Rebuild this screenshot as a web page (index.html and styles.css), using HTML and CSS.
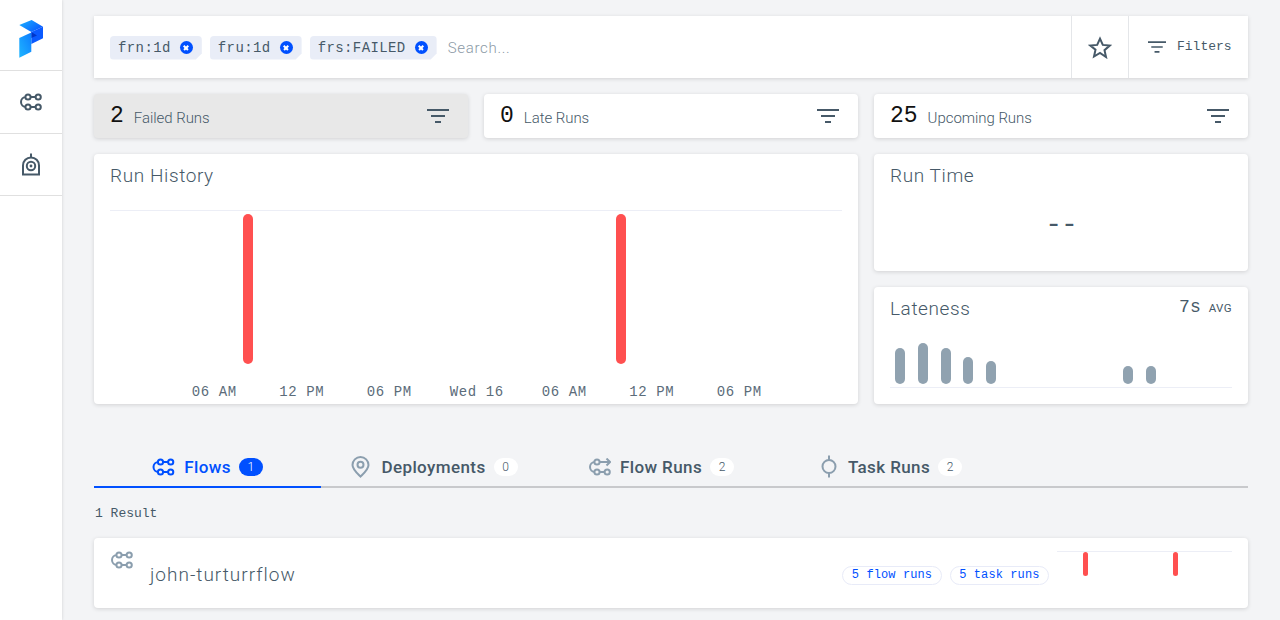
FILE: index.html
```html
<!DOCTYPE html>
<html>
	<head>
		<meta charset="UTF-8">
		<title>Dashboard</title>
		<link rel="stylesheet" href="styles.css">
	</head>
	<body>
		<svg class="defs" width="0" height="0">
			<defs>
				<symbol id="i-flow" viewBox="0 0 22 18">
					<g fill="none" stroke="currentColor" stroke-width="2">
						<circle cx="8" cy="4" r="2.6"/>
						<circle cx="18.2" cy="4" r="2.6"/>
						<circle cx="8" cy="14" r="2.6"/>
						<circle cx="18.2" cy="14" r="2.6"/>
						<path d="M10.6 4h5M10.6 14h5M5.400 4H6A5 5 0 0 0 6 14h-.6"/>
					</g>
				</symbol>
				<symbol id="i-filter" viewBox="0 0 22 16">
					<path fill="currentColor" d="M0 1h22v2H0zM4 7h14v2H4zM8 13h6v2H8z"/>
				</symbol>
			</defs>
		</svg>

		<div class="app">
			<nav class="sidebar">
				<a class="side-item side-logo">
					<svg width="24" height="38" viewBox="0 0 24 38">
						<defs>
							<linearGradient id="lg1" x1="0" y1="0" x2="1" y2="0.6">
								<stop offset="0" stop-color="#1bb4ff"/>
								<stop offset="1" stop-color="#0a5cff"/>
							</linearGradient>
							<linearGradient id="lg2" x1="0" y1="1" x2="1" y2="0">
								<stop offset="0" stop-color="#1fb6ff"/>
								<stop offset="1" stop-color="#0d7cff"/>
							</linearGradient>
						</defs>
						<path fill="url(#lg1)" d="M0.3 5L12.6 0L24 6.700L12.300 12z"/>
						<path fill="#0a5aff" d="M12.300 12L24 6.700V18.300L12.300 24z"/>
						<path fill="#0035c8" d="M12.300 12L18 15.500L12.300 18z"/>
						<path fill="url(#lg2)" d="M0.3 18L12.300 12.500V31.700L0.3 37.700z"/>
					</svg>
				</a>
				<a class="side-item">
					<svg class="side-icon" width="22" height="18"><use href="#i-flow"/></svg>
				</a>
				<a class="side-item">
					<svg class="side-icon" width="20" height="23" viewBox="0 0 20 23">
						<g fill="none" stroke="currentColor" stroke-width="2">
							<path d="M2 21.500V12.500C2 8 5.500 4.500 10 4.500S18 8 18 12.500V21.500H1M10 0.500V4.500"/>
							<circle cx="10" cy="13" r="4.200"/>
						</g>
						<circle cx="10" cy="13" r="1.400" fill="currentColor"/>
					</svg>
				</a>
			</nav>

			<main class="main">
				<section class="searchbar">
					<div class="search-tags">
						<span class="tag">frn:1d<i class="tag-x"></i></span>
						<span class="tag">fru:1d<i class="tag-x"></i></span>
						<span class="tag">frs:FAILED<i class="tag-x"></i></span>
						<span class="search-input">Search...</span>
					</div>
					<div class="search-star">
						<svg width="24" height="23" viewBox="0 0 24 23">
							<path fill="none" stroke="currentColor" stroke-width="2" stroke-linejoin="miter" d="M12 2.600l2.800 6.300 6.900.7-5.200 4.600 1.500 6.800L12 17l-6 3.500 1.500-6.800L2.300 9.600l6.900-.7z"/>
						</svg>
					</div>
					<div class="search-filters">
						<svg width="18" height="14"><use href="#i-filter"/></svg>
						<span>Filters</span>
					</div>
				</section>

				<section class="tiles">
					<div class="card tile tile-active">
						<span class="tile-num">2</span>
						<span class="tile-label">Failed Runs</span>
						<svg class="tile-filter" width="22" height="16"><use href="#i-filter"/></svg>
					</div>
					<div class="card tile">
						<span class="tile-num">0</span>
						<span class="tile-label">Late Runs</span>
						<svg class="tile-filter" width="22" height="16"><use href="#i-filter"/></svg>
					</div>
					<div class="card tile">
						<span class="tile-num">25</span>
						<span class="tile-label">Upcoming Runs</span>
						<svg class="tile-filter" width="22" height="16"><use href="#i-filter"/></svg>
					</div>
				</section>

				<section class="charts">
					<div class="card history">
						<h2 class="card-title">Run History</h2>
						<svg class="history-chart" width="732" height="155">
							<rect x="0" y="0" width="732" height="1" fill="#eceef6"/>
							<rect class="bar-fail" x="133" y="4" width="10" height="150" rx="5"/>
							<rect class="bar-fail" x="506" y="4" width="10" height="150" rx="5"/>
						</svg>
						<div class="history-axis">
							<span>06 AM</span>
							<span>12 PM</span>
							<span>06 PM</span>
							<span>Wed 16</span>
							<span>06 AM</span>
							<span>12 PM</span>
							<span>06 PM</span>
						</div>
					</div>
					<div class="card runtime">
						<h2 class="card-title">Run Time</h2>
						<div class="runtime-value">--</div>
					</div>
					<div class="card lateness">
						<div class="lateness-head">
							<h2 class="card-title">Lateness</h2>
							<div class="lateness-avg"><span>7s</span><small>AVG</small></div>
						</div>
						<svg class="lateness-chart" width="342" height="46">
							<rect class="bar-late" x="5" y="6" width="10" height="36" rx="5"/>
							<rect class="bar-late" x="28" y="1" width="10" height="41" rx="5"/>
							<rect class="bar-late" x="51" y="6" width="10" height="36" rx="5"/>
							<rect class="bar-late" x="73" y="15" width="10" height="27" rx="5"/>
							<rect class="bar-late" x="96" y="19" width="10" height="23" rx="5"/>
							<rect class="bar-late" x="233" y="24" width="10" height="18" rx="5"/>
							<rect class="bar-late" x="256" y="24" width="10" height="18" rx="5"/>
							<rect x="0" y="45" width="342" height="1" fill="#eceef6"/>
						</svg>
					</div>
				</section>

				<section class="tabs">
					<a class="tab tab-active">
						<svg width="23" height="18"><use href="#i-flow"/></svg>
						<span class="tab-text">Flows</span>
						<span class="tab-count">1</span>
					</a>
					<a class="tab">
						<svg class="tab-icon tab-icon-gap" width="19" height="22" viewBox="0 0 18 22">
							<path fill="none" stroke="currentColor" stroke-width="2" d="M9 20.600C5 16.600 1 13.200 1 9a8 8 0 0 1 16 0c0 4.200-4 7.600-8 11.600z"/>
							<circle cx="9" cy="8.800" r="3" fill="none" stroke="currentColor" stroke-width="2"/>
						</svg>
						<span class="tab-text">Deployments</span>
						<span class="tab-count">0</span>
					</a>
					<a class="tab">
						<svg class="tab-icon" width="22" height="18" viewBox="0 0 22 18">
							<g fill="none" stroke="currentColor" stroke-width="2">
								<circle cx="8" cy="4" r="2.600"/>
								<circle cx="8" cy="14" r="2.600"/>
								<circle cx="18.200" cy="14" r="2.600"/>
								<path d="M10.600 4H21M17.500 0.500L21 4l-3.500 3.500M10.600 14h5M5.400 4H6A5 5 0 0 0 6 14h-.6"/>
							</g>
						</svg>
						<span class="tab-text">Flow Runs</span>
						<span class="tab-count">2</span>
					</a>
					<a class="tab tab-last">
						<svg class="tab-icon tab-icon-gap" width="16" height="23" viewBox="0 0 16 22">
							<g fill="none" stroke="currentColor" stroke-width="2">
								<circle cx="8" cy="11" r="6.500"/>
								<path d="M8 0v4.500M8 17.500V22"/>
							</g>
						</svg>
						<span class="tab-text">Task Runs</span>
						<span class="tab-count">2</span>
					</a>
				</section>

				<div class="results">1 Result</div>

				<section class="card flow-row">
					<svg class="flow-icon" width="22" height="18"><use href="#i-flow"/></svg>
					<span class="flow-name">john-turturrflow</span>
					<span class="pill">5 flow runs</span>
					<span class="pill">5 task runs</span>
					<svg class="flow-chart" width="175" height="38">
						<rect x="0" y="12" width="175" height="1" fill="#eceef6"/>
						<rect class="bar-fail" x="26" y="13" width="5" height="24" rx="2.500"/>
						<rect class="bar-fail" x="116" y="13" width="5" height="24" rx="2.500"/>
					</svg>
				</section>
			</main>
		</div>
	</body>
</html>
```
FILE: styles.css
```css
body{
	margin:0;
	background-color:#f3f4f6;
	font-family:"Roboto","Liberation Sans",sans-serif;
	color:#465968;
	overflow:hidden;
}
h2{
	margin:0;
	font-weight:400;
}
.defs{
	position:absolute;
}
.app{
	display:flex;
	height:620px;
}

/* left bar */
.sidebar{
	width:62px;
	flex:none;
	background:#fff;
	box-shadow:0 0 3px rgba(0,0,0,.15);
}
.side-item{
	display:flex;
	align-items:center;
	justify-content:center;
	height:61px;
	border-bottom:1px solid #e0e0e0;
}
.side-logo{
	height:70px;
}
.side-item + .side-item{
	height:61.500px;
}
.side-logo svg{
	margin-top:8px;
}
.side-icon{
	color:#465968;
}

.main{
	width:1154px;
	margin-left:32px;
	padding-top:16px;
}
.card{
	background:#fff;
	border-radius:4px;
	box-shadow:0 1px 4px rgba(0,0,0,.14);
}

/* search */
.searchbar{
	display:flex;
	height:62px;
	background:#fff;
	box-shadow:0 1px 4px rgba(0,0,0,.14);
}
.search-tags{
	flex:1;
	display:flex;
	align-items:center;
	gap:8px;
	padding:0 16px;
}
.tag{
	display:flex;
	align-items:center;
	height:24px;
	padding:0 9px 0 8px;
	margin-top:1px;
	background:#e9edf7;
	border-radius:4px;
	font:14px "Liberation Mono",monospace;
	letter-spacing:.4px;
	color:#465968;
	clip-path:polygon(0 0,100% 0,100% calc(100% - 6px),calc(100% - 6px) 100%,0 100%);
}
.tag-x{
	position:relative;
	width:13px;
	height:13px;
	margin-left:9px;
	border-radius:50%;
	background:#0050ff;
}
.tag-x:before,
.tag-x:after{
	content:"";
	position:absolute;
	left:3.500px;
	top:5.750px;
	width:6px;
	height:1.500px;
	background:#fff;
	transform:rotate(45deg);
}
.tag-x:after{
	transform:rotate(-45deg);
}
.search-input{
	margin:1px 0 0 3px;
	font-size:15px;
	font-weight:300;
	letter-spacing:.7px;
	color:#8c9aa6;
}
.search-star{
	display:flex;
	align-items:center;
	justify-content:center;
	width:56px;
	border-left:1px solid #e4e6e9;
	color:#465968;
}
.search-filters{
	display:flex;
	align-items:center;
	gap:11px;
	width:100px;
	padding-left:19px;
	border-left:1px solid #e4e6e9;
	font:13px "Liberation Mono",monospace;
	color:#465968;
}
.search-filters span{
	padding-bottom:2px;
}

/* count tiles */
.tiles{
	display:grid;
	grid-template-columns:repeat(3,374px);
	gap:16px;
	margin-top:16px;
}
.tile{
	display:flex;
	align-items:center;
	height:44px;
	padding:0 19px 0 16px;
}
.tile-active{
	background:#e8e8e8;
}
.tile-num{
	font:23px "Liberation Mono",monospace;
	color:#111;
}
.tile-label{
	margin:3px 0 0 10px;
	font-size:15px;
	font-weight:300;
	letter-spacing:-.05px;
	color:#465968;
}
.tile-filter{
	margin-left:auto;
	color:#465968;
}

/* charts */
.charts{
	display:grid;
	grid-template-columns:764px 374px;
	grid-template-rows:117px 117px;
	gap:16px;
	margin-top:16px;
}
.card-title{
	margin-top:1px;
	font-size:19px;
	font-weight:300;
	letter-spacing:.6px;
	line-height:22px;
	color:#465968;
}
.history{
	grid-row:1 / span 2;
	padding:10px 16px 0;
}
.history-chart{
	display:block;
	margin-top:23px;
}
.history-axis{
	display:grid;
	grid-template-columns:repeat(7,87.500px);
	margin:18px 0 0 60.500px;
	font:14px/18px "Liberation Mono",monospace;
	letter-spacing:.6px;
	color:#5b6c7a;
	text-align:center;
}
.runtime{
	padding:10px 16px 0;
}
.runtime-value{
	margin-top:23px;
	font:28px/30px "Liberation Mono",monospace;
	letter-spacing:-1px;
	text-align:center;
	color:#465968;
}
.lateness{
	padding:10px 16px 0;
}
.lateness-head{
	display:flex;
	justify-content:space-between;
}
.lateness-avg{
	display:flex;
	align-items:baseline;
	gap:8px;
	font:18px/20px "Liberation Mono",monospace;
	color:#465968;
}
.lateness-avg small{
	font:11.500px "Roboto",sans-serif;
	letter-spacing:.4px;
}
.lateness-chart{
	display:block;
	margin-top:22px;
}
.bar-fail{
	fill:#ff5050;
}
.bar-late{
	fill:#90a2b0;
}

/* tabs */
.tabs{
	display:flex;
	height:39px;
	margin-top:43px;
	border-bottom:2px solid #c8c9cc;
}
.tab{
	display:flex;
	align-items:center;
	justify-content:center;
	width:227px;
	height:39px;
	color:#465968;
}
.tab-last{
	margin-left:3px;
}
.tab-active{
	color:#0050ff;
	border-bottom:2px solid #0050ff;
}
.tab-icon{
	color:#8b9eae;
}
.tab-icon-gap{
	margin-right:2px;
}
.tab-text{
	margin-left:9px;
	font-size:17px;
	font-weight:500;
	letter-spacing:.4px;
}
.tab-count{
	display:flex;
	align-items:center;
	justify-content:center;
	width:24px;
	height:18px;
	margin-left:8px;
	border-radius:9px;
	background:#fff;
	font-size:12px;
	font-weight:300;
}
.tab-active .tab-count{
	background:#0050ff;
	color:#fff;
}
.results{
	margin:17px 0 0 1px;
	font:13px/18px "Liberation Mono",monospace;
	color:#465968;
}

/* flow row */
.flow-row{
	display:flex;
	height:70px;
	margin-top:15px;
}
.flow-icon{
	margin:13px 0 0 17px;
	color:#8b9eae;
}
.flow-name{
	margin:26px auto 0 17px;
	font-size:19px;
	font-weight:300;
	letter-spacing:1px;
	line-height:22px;
}
.pill{
	height:19px;
	margin:28px 8px 0 0;
	padding:0 8.500px;
	border:1px solid #e8ebf8;
	border-radius:10px;
	box-sizing:border-box;
	font:12px/17px "Liberation Mono",monospace;
	letter-spacing:.1px;
	color:#0050ff;
}
.flow-chart{
	margin-right:16px;
	flex:none;
	align-self:flex-start;
	margin-top:1px;
}
```
